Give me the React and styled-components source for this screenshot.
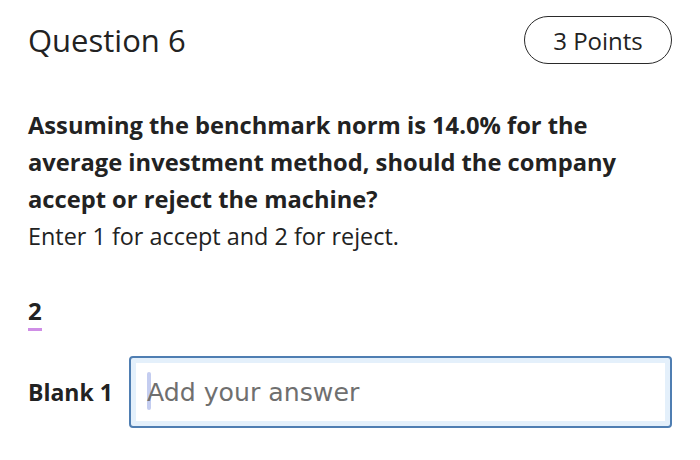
import React from "react";
import styled, { createGlobalStyle } from "styled-components";

const Global = createGlobalStyle`
  html, body { margin: 0; padding: 0; background: #ffffff; }
  body { font-family: "Open Sans", "Noto Sans", sans-serif; color: #222; }
`;

const Page = styled.div`
  width: 700px;
  height: 460px;
  box-sizing: border-box;
  padding: 16px 28px 0 28px;
  display: flex;
  flex-direction: column;
  overflow: hidden;
`;

const Header = styled.div`
  display: flex;
  align-items: center;
  justify-content: space-between;
  height: 48px;
`;

const Title = styled.h1`
  margin: 0;
  font-size: 31px;
  font-weight: 400;
  color: #222;
`;

const Pill = styled.div`
  box-sizing: border-box;
  width: 148px;
  height: 48px;
  border: 1.5px solid #2a2a2a;
  border-radius: 24px;
  display: flex;
  align-items: center;
  justify-content: center;
  font-size: 24px;
  color: #222;
`;

const Question = styled.p`
  margin: 43px 0 0 0;
  font-size: 23.7px;
  font-weight: 700;
  line-height: 37px;
  color: #222;
`;

const Hint = styled.p`
  margin: 0;
  font-size: 23.4px;
  font-weight: 400;
  line-height: 37px;
  color: #222;
`;

const Answer = styled.div`
  margin-top: 44px;
  display: flex;
  flex-direction: column;
  align-items: flex-start;
  gap: 5px;
`;

const AnswerValue = styled.span`
  font-size: 24px;
  font-weight: 700;
  line-height: 24px;
  color: #222;
`;

const Underline = styled.span`
  width: 14px;
  height: 3px;
  background: #cf8ee6;
`;

const BlankRow = styled.div`
  margin-top: 25px;
  display: flex;
  align-items: center;
  gap: 16px;
`;

const BlankLabel = styled.span`
  font-size: 23px;
  font-weight: 700;
  color: #222;
  white-space: nowrap;
`;

const Field = styled.div`
  box-sizing: border-box;
  flex: 1;
  height: 72px;
  border: 2px solid #4f7eb2;
  border-radius: 4px;
  padding: 5px;
  background: #e4f0fb;
`;

const Inner = styled.div`
  box-sizing: border-box;
  height: 100%;
  background: #ffffff;
  display: flex;
  align-items: center;
  padding-left: 11px;
  position: relative;
`;

const Caret = styled.span`
  position: absolute;
  left: 11px;
  top: 9px;
  width: 4px;
  height: 38px;
  background: #c4cdf0;
  border-radius: 2px;
`;

const Placeholder = styled.span`
  font-family: "DejaVu Sans", Verdana, sans-serif;
  font-size: 25.2px;
  color: #6f6f6f;
  position: relative;
`;

export default function App() {
  return (
    <>
      <Global />
      <Page>
        <Header>
          <Title>Question 6</Title>
          <Pill>3 Points</Pill>
        </Header>
        <Question>
          Assuming the benchmark norm is 14.0% for the average investment method, should the company accept or reject the machine?
        </Question>
        <Hint>Enter 1 for accept and 2 for reject.</Hint>
        <Answer>
          <AnswerValue>2</AnswerValue>
          <Underline />
        </Answer>
        <BlankRow>
          <BlankLabel>Blank 1</BlankLabel>
          <Field>
            <Inner>
              <Caret />
              <Placeholder>Add your answer</Placeholder>
            </Inner>
          </Field>
        </BlankRow>
      </Page>
    </>
  );
}
